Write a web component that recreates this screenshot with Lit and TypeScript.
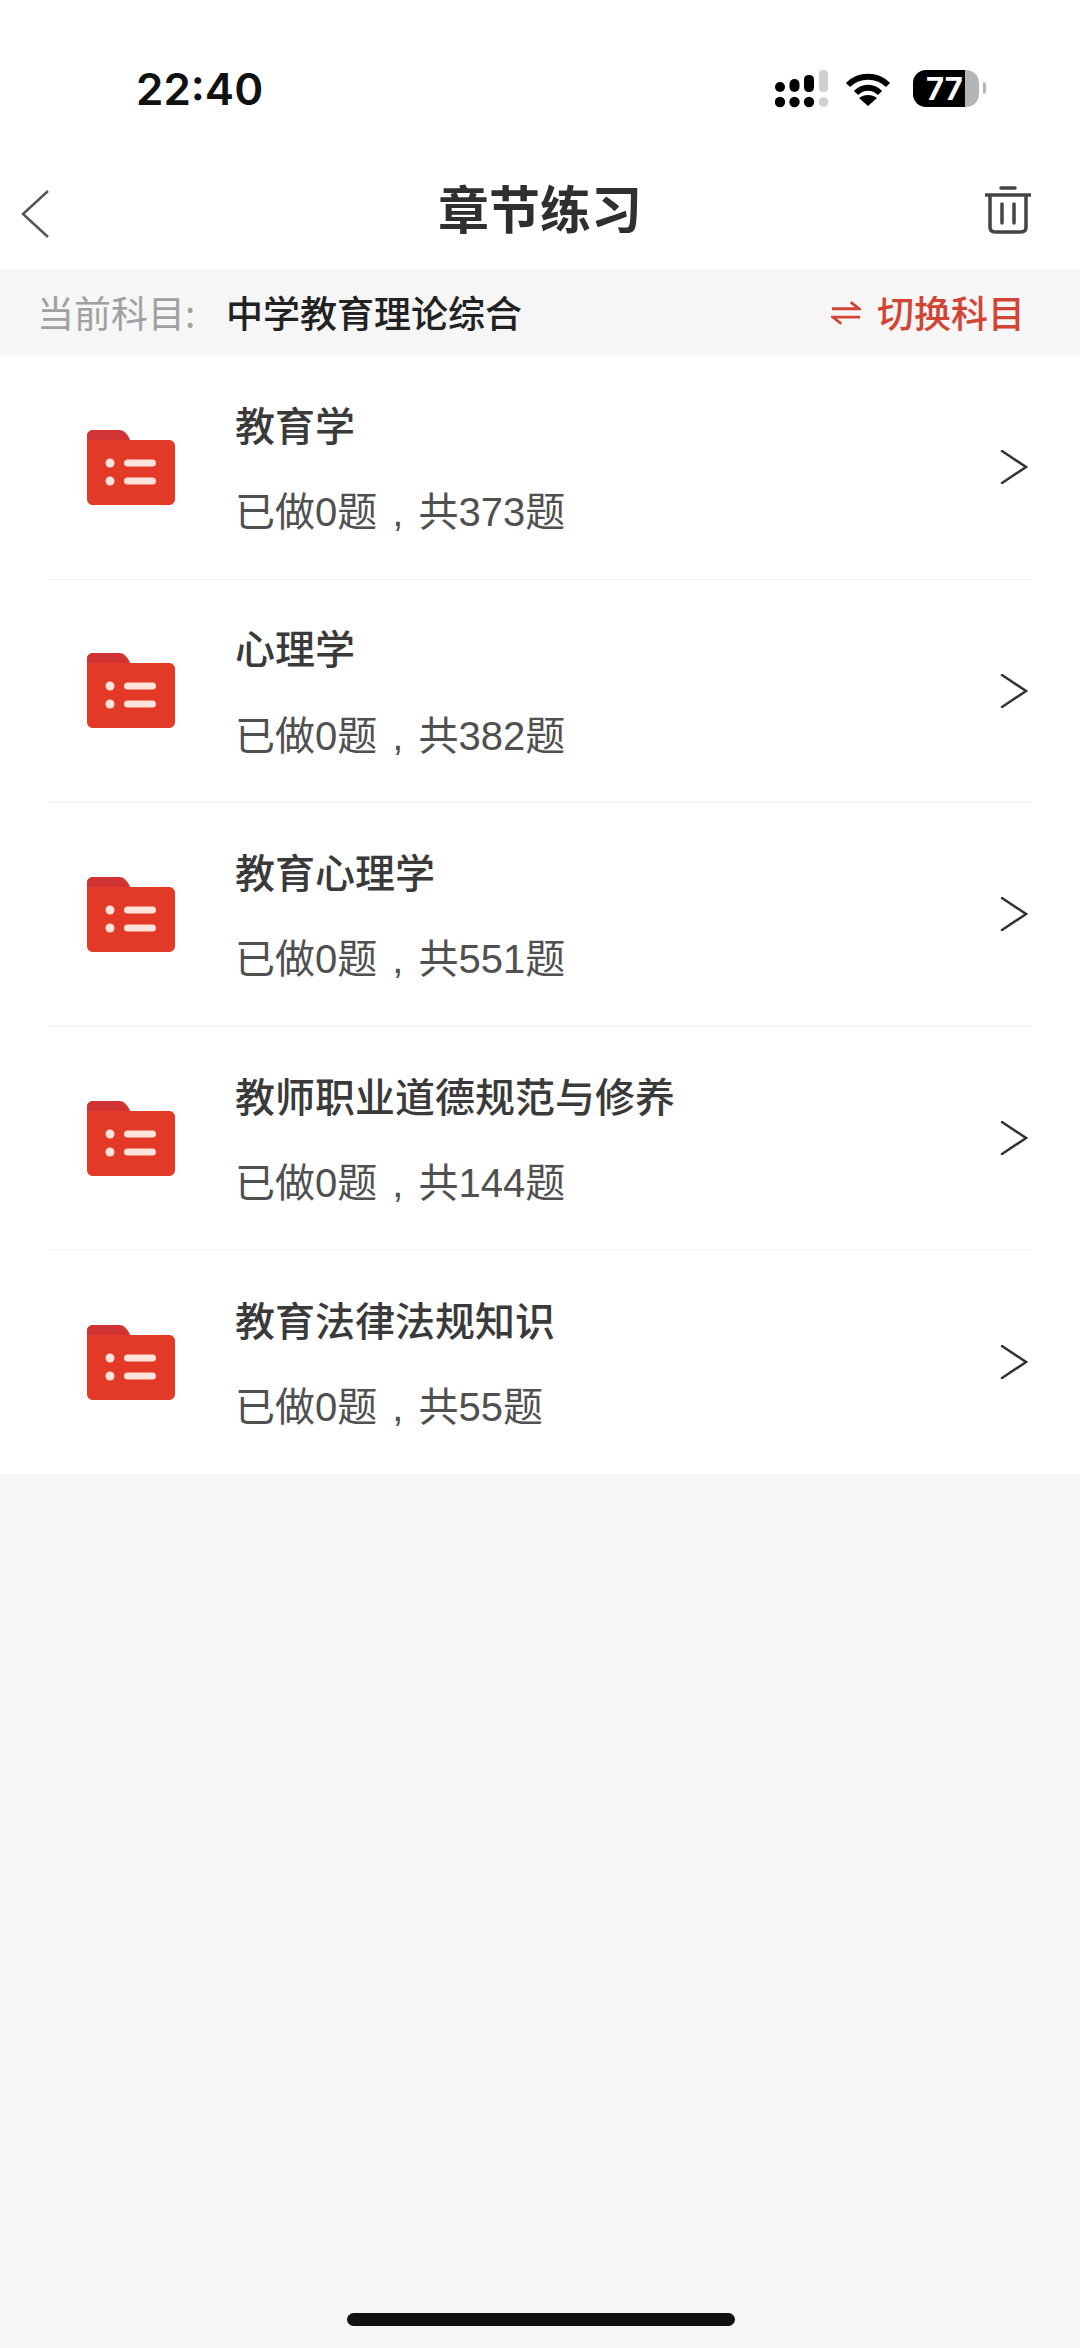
import { css, html, LitElement, svg } from 'lit';
import { customElement } from 'lit/decorators.js';

const chapters = [
  { name: '教育学', total: 373 },
  { name: '心理学', total: 382 },
  { name: '教育心理学', total: 551 },
  { name: '教师职业道德规范与修养', total: 144 },
  { name: '教育法律法规知识', total: 55 },
];

const folderIcon = svg`
  <svg class="folder" viewBox="0 0 88 75" width="88" height="75">
    <path fill="#e23a26" d="M6 0H31C36 0 38 2 41 6L43 10H82C85.500 10 88 12.500 88 16V69C88 72.500 85.500 75 82 75H6C2.500 75 0 72.500 0 69V6C0 2.500 2.500 0 6 0Z"/>
    <path fill="#c9323a" opacity=".7" d="M6 0H31C36 0 38 2 41 6L43 10H0V6C0 2.500 2.500 0 6 0Z"/>
    <circle cx="23" cy="33" r="4.500" fill="#fde3dc"/>
    <circle cx="23" cy="51" r="4.500" fill="#fde3dc"/>
    <rect x="37" y="29.500" width="32" height="7" rx="3.500" fill="#fde3dc"/>
    <rect x="37" y="47.500" width="32" height="7" rx="3.500" fill="#fde3dc"/>
  </svg>`;

@customElement('app-root')
export class AppRoot extends LitElement {
  static styles = css`
    :host {
      background: #f6f6f6;
      color: #333;
      display: block;
      font-family: 'Noto Sans CJK SC', 'Liberation Sans', sans-serif;
      height: 2348px;
      position: relative;
      width: 1080px;
    }
    .status {
      align-items: center;
      background: #fff;
      box-sizing: border-box;
      display: flex;
      height: 130px;
      justify-content: space-between;
      padding: 47px 101px 0 136px;
    }
    .time {
      color: #111;
      font-family: Inter, sans-serif;
      font-size: 44px;
      font-weight: 600;
      line-height: 50px;
    }
    .status-icons {
      align-items: center;
      display: flex;
      gap: 19px;
    }
    .wifi {
      margin: 0 3px 0 -3px;
    }
    .battery {
      background: linear-gradient(90deg, #000 0 79%, #b5b5b5 79%);
      border-radius: 13px;
      color: #fff;
      font-family: Inter, sans-serif;
      font-size: 31px;
      font-weight: 700;
      height: 37px;
      line-height: 37px;
      padding-left: 13px;
      position: relative;
      width: 53px;
    }
    .battery::after {
      background: #b5b5b5;
      border-radius: 0 3px 3px 0;
      content: '';
      height: 12px;
      left: 70px;
      position: absolute;
      top: 12px;
      width: 3px;
    }
    .nav {
      align-items: center;
      background: #fff;
      box-sizing: border-box;
      display: grid;
      grid-template-columns: 1fr auto 1fr;
      height: 140px;
      padding-top: 20px;
    }
    .nav h1 {
      color: #2f2f2f;
      font-size: 51px;
      font-weight: 700;
      line-height: 70px;
      margin: 0 0 6px;
    }
    .back {
      margin: 8px 0 0 20px;
    }
    .trash {
      justify-self: end;
      margin-right: 49px;
    }
    .subject {
      align-items: center;
      display: flex;
      font-size: 37px;
      height: 86px;
      line-height: 50px;
      padding: 0 55px 2px 37px;
      box-sizing: border-box;
    }
    .label {
      color: #a0a0a0;
      width: 189px;
    }
    .value {
      color: #222;
      flex: 1;
      font-weight: 500;
    }
    .switch {
      align-items: center;
      color: #d14534;
      display: flex;
      font-weight: 500;
      gap: 16px;
    }
    .list {
      background: #fff;
    }
    .row {
      align-items: center;
      border-bottom: 1px solid #f2f2f2;
      box-sizing: border-box;
      display: flex;
      height: 223.6px;
      margin: 0 48px;
      padding: 0 4px 0 39px;
    }
    .row:last-child {
      border-bottom: none;
    }
    .folder {
      flex: none;
      margin-right: 60px;
    }
    .text {
      display: flex;
      flex: 1;
      flex-direction: column;
      gap: 38.500px;
      padding-top: 1.500px;
    }
    .title {
      color: #3a3a3a;
      font-size: 40px;
      font-weight: 500;
      line-height: 50px;
    }
    .count {
      color: #505050;
      font-family: 'Liberation Sans', 'Noto Sans CJK SC', sans-serif;
      font-size: 40px;
      line-height: 50px;
      word-spacing: 4px;
    }
    .home {
      background: #111;
      border-radius: 7px;
      bottom: 22px;
      height: 13px;
      left: 347px;
      position: absolute;
      width: 388px;
    }
  `;

  render() {
    return html`
      <div class="status">
        <span class="time">22:40</span>
        <div class="status-icons">
          <svg viewBox="0 0 54 38" width="54" height="38">
            <g fill="#000">
              <rect x="0" y="12" width="10" height="10" rx="5"/>
              <rect x="14.500" y="9" width="10" height="13" rx="5"/>
              <rect x="29" y="5" width="10" height="17" rx="4.500"/>
              <circle cx="5" cy="32" r="5.200"/>
              <circle cx="19.500" cy="32" r="5.200"/>
              <circle cx="34" cy="32" r="5.200"/>
            </g>
            <g fill="#d0d0d0">
              <rect x="44" y="0" width="9" height="22" rx="4"/>
              <circle cx="48.500" cy="32" r="4.800"/>
            </g>
          </svg>
          <svg class="wifi" viewBox="0 0 46 34" width="46" height="34">
            <path fill="none" stroke="#000" stroke-width="6" d="M3 13C14 2 32 2 43 13"/>
            <path fill="none" stroke="#000" stroke-width="6" d="M11 21C18 14 28 14 35 21"/>
            <path fill="#000" d="M23 34L14 26C19 22 27 22 32 26Z"/>
          </svg>
          <div class="battery">77</div>
        </div>
      </div>
      <div class="nav">
        <svg class="back" viewBox="0 0 30 50" width="30" height="50">
          <path fill="none" stroke="#555" stroke-width="2.500" d="M28 2L3 25L28 48"/>
        </svg>
        <h1>章节练习</h1>
        <svg class="trash" viewBox="0 0 46 48" width="46" height="48">
          <g fill="none" stroke="#444" stroke-width="3.500" stroke-linecap="round">
            <path d="M1 9H45M16 2H30"/>
            <path d="M5 10V41C5 45 7 46 10 46H36C39 46 41 45 41 41V10"/>
            <path d="M17 18V37M29 18V37"/>
          </g>
        </svg>
      </div>
      <div class="subject">
        <span class="label">当前科目:</span>
        <span class="value">中学教育理论综合</span>
        <span class="switch">
          <svg viewBox="0 0 32 26" width="30" height="25">
            <path fill="none" stroke="#d14534" stroke-width="3" d="M1 9H30L21 2M31 18H2L11 25"/>
          </svg>
          切换科目
        </span>
      </div>
      <div class="list">
        ${chapters.map(
          (c) => html`
            <div class="row">
              ${folderIcon}
              <div class="text">
                <span class="title">${c.name}</span>
                <span class="count">已做0题 , 共${c.total}题</span>
              </div>
              <svg viewBox="0 0 28 34" width="28" height="34">
                <path fill="none" stroke="#333" stroke-width="2.500" stroke-linecap="round" d="M2 1L26 17L2 33"/>
              </svg>
            </div>
          `,
        )}
      </div>
      <div class="home"></div>
    `;
  }
}
